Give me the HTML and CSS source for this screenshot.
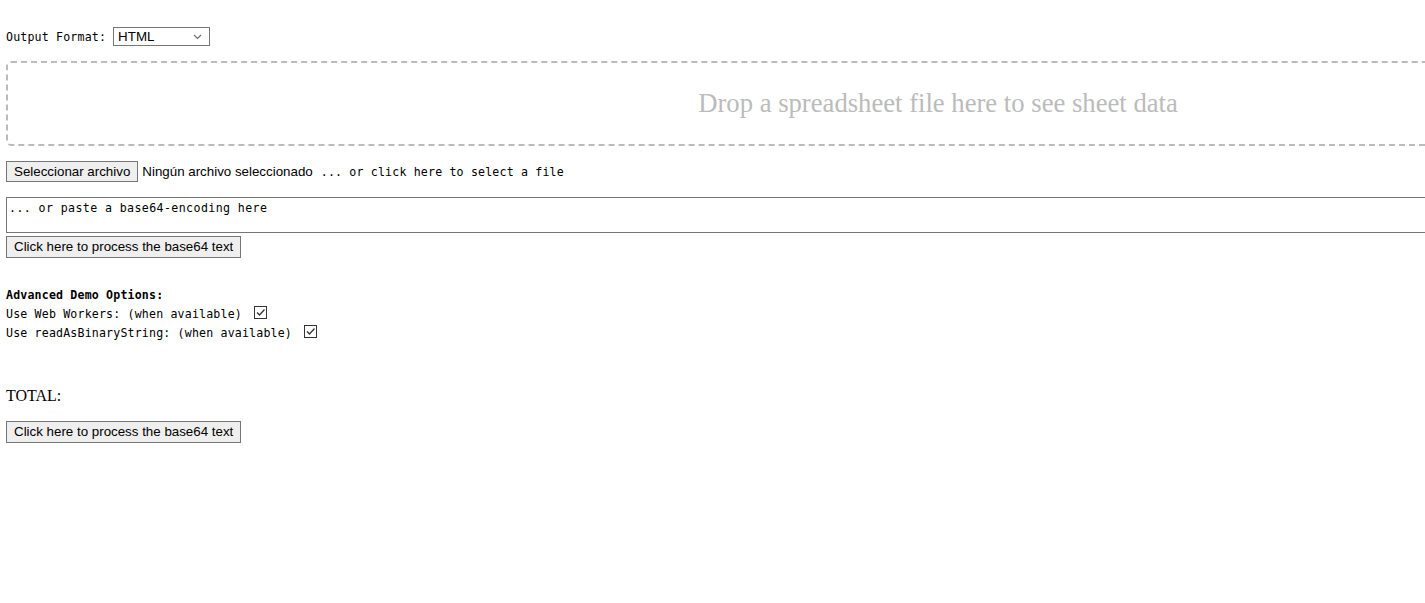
FILE: index.html
```html
<!DOCTYPE html>
<html lang="en">
<head>
<meta charset="utf-8">
<title>SheetJS Live Demo</title>
<link rel="stylesheet" href="styles.css">
</head>
<body>
<div class="page">
  <div class="format-row">
    <span class="mono">Output Format:</span>
    <span class="select">
      <span class="select-value">HTML</span>
      <svg class="chevron" width="9" height="6" viewBox="0 0 9 6"><path d="M1 1l3.5 3.5L8 1" fill="none" stroke="#6d6d6d" stroke-width="1.2"/></svg>
    </span>
  </div>

  <div class="drop">Drop a spreadsheet file here to see sheet data</div>

  <div class="file-row">
    <span class="btn">Seleccionar archivo</span>
    <span class="file-name">Ningún archivo seleccionado</span>
    <span class="mono file-hint">... or click here to select a file</span>
  </div>

  <div class="textarea mono">... or paste a base64-encoding here</div>
  <div class="btn-row"><span class="btn">Click here to process the base64 text</span></div>

  <div class="options mono">
    <div class="opt-title">Advanced Demo Options:</div>
    <div class="opt-line">Use Web Workers: (when available) <span class="check"><svg width="11" height="11" viewBox="0 0 11 11"><path d="M2 5.5l2.5 2.5L9.5 2.5" fill="none" stroke="#333" stroke-width="1.3"/></svg></span></div>
    <div class="opt-line">Use readAsBinaryString: (when available) <span class="check"><svg width="11" height="11" viewBox="0 0 11 11"><path d="M2 5.5l2.5 2.5L9.5 2.5" fill="none" stroke="#333" stroke-width="1.3"/></svg></span></div>
  </div>

  <div class="total">TOTAL:</div>
  <div class="btn-row last"><span class="btn">Click here to process the base64 text</span></div>
</div>
</body>
</html>
```

FILE: styles.css
```css
html, body {
  margin: 0;
  padding: 0;
  overflow: hidden;
  background: #fff;
}
.page {
  padding: 27px 0 0 6px;
  font-family: "Liberation Serif", "Times New Roman", serif;
  color: #000;
}
.mono {
  font-family: "DejaVu Sans Mono", "Liberation Mono", monospace;
  font-size: 11.6px;
  letter-spacing: 0.17px;
}
.format-row {
  display: flex;
  align-items: center;
  height: 19px;
}
.select {
  margin-left: 7px;
  display: flex;
  align-items: center;
  justify-content: space-between;
  padding: 0 7px 0 4px;
  box-sizing: border-box;
  width: 97px;
  height: 19px;
  border: 1px solid #767676;
  font-family: "Liberation Sans", Arial, sans-serif;
  font-size: 13.33px;
}
.chevron { display: block; }
.drop {
  margin-top: 15px;
  width: 1810px;
  height: 31px;
  padding: 25px;
  border: 2px dashed #bbb;
  border-radius: 5px;
  text-align: center;
  font-size: 26.67px;
  line-height: 31px;
  color: #bbb;
}
.file-row {
  margin-top: 15px;
  display: flex;
  align-items: center;
  height: 21px;
  font-family: "Liberation Sans", Arial, sans-serif;
  font-size: 13.33px;
}
.btn {
  display: inline-block;
  box-sizing: border-box;
  height: 21px;
  line-height: 19px;
  padding: 0 7px;
  background: #efefef;
  border: 1px solid #767676;
  font-family: "Liberation Sans", Arial, sans-serif;
  font-size: 13.33px;
  color: #000;
}
.file-name { margin-left: 4px; }
.file-hint { margin-left: 8px; }
.textarea {
  margin-top: 15px;
  box-sizing: border-box;
  width: 1500px;
  height: 36px;
  border: 1px solid #767676;
  padding: 3px 2px;
  line-height: 15px;
  letter-spacing: 0.4px;
}
.btn-row {
  margin-top: 3px;
  display: flex;
}
.btn-row .btn { height: 22px; line-height: 20px; }
.options {
  margin-top: 28px;
  line-height: 19px;
}
.opt-title { font-weight: bold; }
.opt-line {
  display: flex;
  align-items: center;
  white-space: pre;
}
.check {
  margin-left: 5px;
  width: 13px;
  height: 13px;
  box-sizing: border-box;
  border: 1px solid #333;
  display: flex;
  align-items: center;
  justify-content: center;
  margin-top: -4px;
}
.check svg { display: block; }
.total {
  margin-top: 44px;
  font-size: 16px;
  line-height: 18px;
}
.btn-row.last { margin-top: 16px; }
```
